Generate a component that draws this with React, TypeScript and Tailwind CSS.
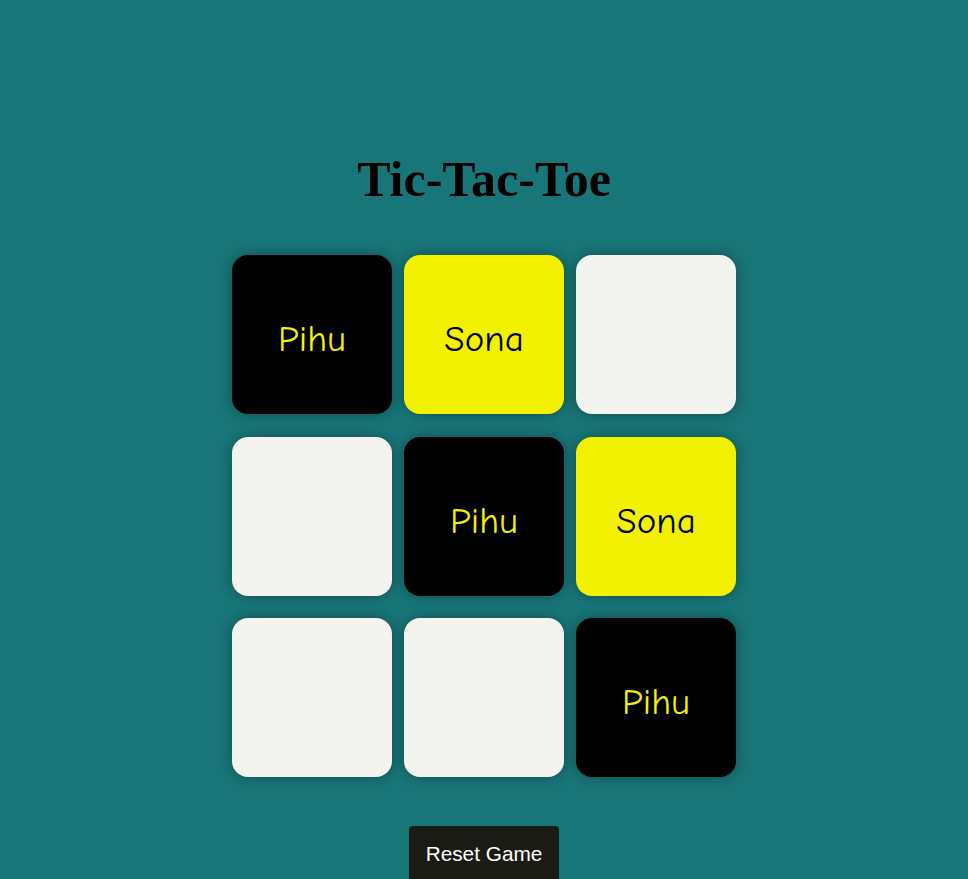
const board = ["Pihu", "Sona", "", "", "Pihu", "Sona", "", "", "Pihu"];

const App = () => {
  return (
    <main className="min-h-screen bg-[#187678] flex flex-col items-center pt-[151px]">
      <h1 className="font-['Liberation_Serif','Times_New_Roman',serif] text-[50px] leading-[56px] font-bold text-black">
        Tic-Tac-Toe
      </h1>

      <div className="mt-[48px] grid grid-cols-[160px_160px_160px] gap-x-3 gap-y-[22.5px]">
        {board.map((v, i) => (
          <div
            key={i}
            className={
              "flex h-[159px] w-[160px] items-center justify-center rounded-2xl shadow-[0_0_14px_rgba(0,0,0,0.35)] font-['Comic_Sans_MS','Comic_Neue','Noto_Sans',sans-serif] text-[37px] pt-[11px] " +
              (v === "Pihu"
                ? "bg-black text-[#f2f200]"
                : v === "Sona"
                  ? "bg-[#f2f200] text-black"
                  : "bg-[#f3f3ef]")
            }
          >
            {v}
          </div>
        ))}
      </div>

      <button className="mt-[49px] rounded-[4px] bg-[#1b1b16] px-[17px] py-4 font-['Liberation_Sans',Arial,sans-serif] text-[20.8px] leading-6 text-white">
        Reset Game
      </button>
    </main>
  );
};

export default App;
